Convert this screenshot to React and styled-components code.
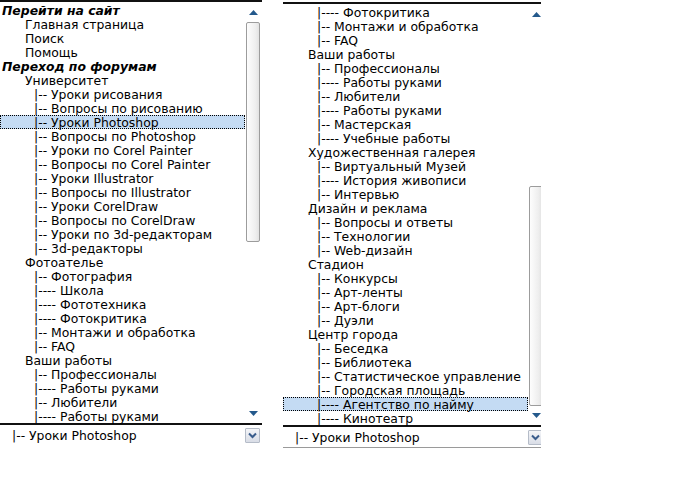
import React from 'react';
import styled, { createGlobalStyle } from 'styled-components';

const GlobalStyle = createGlobalStyle`
  body {
    margin: 0;
    background: #fff;
    font-family: 'DejaVu Sans', Verdana, sans-serif;
  }
`;

const ROW = 14;

// level: 0 = group label, 1 = section, 2 = forum
const siteMenu = [
  { level: 0, text: 'Перейти на сайт' },
  { level: 1, text: 'Главная страница' },
  { level: 1, text: 'Поиск' },
  { level: 1, text: 'Помощь' },
  { level: 0, text: 'Переход по форумам' },
  { level: 1, text: 'Университет' },
  { level: 2, text: '|-- Уроки рисования' },
  { level: 2, text: '|-- Вопросы по рисованию' },
  { level: 2, text: '|-- Уроки Photoshop', selected: true },
  { level: 2, text: '|-- Вопросы по Photoshop' },
  { level: 2, text: '|-- Уроки по Corel Painter' },
  { level: 2, text: '|-- Вопросы по Corel Painter' },
  { level: 2, text: '|-- Уроки Illustrator' },
  { level: 2, text: '|-- Вопросы по Illustrator' },
  { level: 2, text: '|-- Уроки CorelDraw' },
  { level: 2, text: '|-- Вопросы по CorelDraw' },
  { level: 2, text: '|-- Уроки по 3d-редакторам' },
  { level: 2, text: '|-- 3d-редакторы' },
  { level: 1, text: 'Фотоателье' },
  { level: 2, text: '|-- Фотография' },
  { level: 2, text: '|---- Школа' },
  { level: 2, text: '|---- Фототехника' },
  { level: 2, text: '|---- Фотокритика' },
  { level: 2, text: '|-- Монтажи и обработка' },
  { level: 2, text: '|-- FAQ' },
  { level: 1, text: 'Ваши работы' },
  { level: 2, text: '|-- Профессионалы' },
  { level: 2, text: '|---- Работы руками' },
  { level: 2, text: '|-- Любители' },
  { level: 2, text: '|---- Работы руками' },
];

const forumMenu = [
  { level: 2, text: '|---- Фотокритика' },
  { level: 2, text: '|-- Монтажи и обработка' },
  { level: 2, text: '|-- FAQ' },
  { level: 1, text: 'Ваши работы' },
  { level: 2, text: '|-- Профессионалы' },
  { level: 2, text: '|---- Работы руками' },
  { level: 2, text: '|-- Любители' },
  { level: 2, text: '|---- Работы руками' },
  { level: 2, text: '|-- Мастерская' },
  { level: 2, text: '|---- Учебные работы' },
  { level: 1, text: 'Художественная галерея' },
  { level: 2, text: '|-- Виртуальный Музей' },
  { level: 2, text: '|---- История живописи' },
  { level: 2, text: '|-- Интервью' },
  { level: 1, text: 'Дизайн и реклама' },
  { level: 2, text: '|-- Вопросы и ответы' },
  { level: 2, text: '|-- Технологии' },
  { level: 2, text: '|-- Web-дизайн' },
  { level: 1, text: 'Стадион' },
  { level: 2, text: '|-- Конкурсы' },
  { level: 2, text: '|-- Арт-ленты' },
  { level: 2, text: '|-- Арт-блоги' },
  { level: 2, text: '|-- Дуэли' },
  { level: 1, text: 'Центр города' },
  { level: 2, text: '|-- Беседка' },
  { level: 2, text: '|-- Библиотека' },
  { level: 2, text: '|-- Статистическое управление' },
  { level: 2, text: '|-- Городская площадь' },
  { level: 2, text: '|---- Агентство по найму', selected: true },
  { level: 2, text: '|---- Кинотеатр' },
];

const INDENT = [2, 25, 34];

const Page = styled.div`
  display: flex;
  align-items: flex-start;
  gap: 21px;
`;

const Frame = styled.div`
  width: ${p => p.$width}px;
  margin-top: ${p => p.$top}px;
  overflow: hidden;
`;

const Dropdown = styled.div`
  width: 262px;
  display: flex;
  flex-direction: column;
`;

const ListBox = styled.div`
  display: flex;
  border-top: 2px solid #111;
  border-bottom: 2px solid #111;
  padding-top: 1px;
`;

const Options = styled.div`
  width: 245px;
  display: flex;
  flex-direction: column;
`;

const Option = styled.div`
  height: ${ROW}px;
  line-height: 16px;
  font-size: 12.4px;
  color: #000;
  white-space: nowrap;
  padding-left: ${p => INDENT[p.$level]}px;
  font-weight: ${p => (p.$level === 0 ? 'bold' : 'normal')};
  font-style: ${p => (p.$level === 0 ? 'italic' : 'normal')};
  background: ${p => (p.$selected ? '#c4dbf3' : 'transparent')};
  outline: ${p => (p.$selected ? '1px dotted #000' : 'none')};
  outline-offset: -1px;
`;

const ScrollBar = styled.div`
  width: 16px;
  display: flex;
  flex-direction: column;
`;

const ArrowButton = styled.div`
  height: 19px;
  display: flex;
  align-items: center;
  justify-content: center;
`;

const Track = styled.div`
  flex: 1;
  display: flex;
  flex-direction: column;
  justify-content: ${p => (p.$at === 'end' ? 'flex-end' : 'flex-start')};
`;

const Thumb = styled.div`
  height: 220px;
  margin: 0 1px;
  border: 1px solid #9c9c9c;
  border-radius: 2px;
  box-sizing: border-box;
  background: linear-gradient(to right, #fdfdfd, #eeeeee 70%, #e2e2e2);
`;

const SelectRow = styled.div`
  height: 20px;
  display: flex;
  align-items: center;
  border-bottom: ${p => (p.$underline ? '1px solid #9a9a9a' : '1px solid transparent')};
`;

const SelectValue = styled.div`
  flex: 1;
  padding-left: 12px;
  font-size: 12.4px;
  color: #000;
  white-space: nowrap;
`;

const SelectButton = styled.div`
  width: 15px;
  height: 15px;
  margin-right: 2px;
  box-sizing: border-box;
  border: 1px solid #b5bcc8;
  border-radius: 1px;
  background: linear-gradient(#f4f5f8, #d9dde6);
  display: flex;
  align-items: center;
  justify-content: center;
`;

const Triangle = ({ down }) => (
  <svg width="9" height="5" viewBox="0 0 9 5">
    <polygon points={down ? '0,0 9,0 4.5,5' : '0,5 9,5 4.5,0'} fill="#24598c" />
  </svg>
);

const Chevron = () => (
  <svg width="9" height="7" viewBox="0 0 9 7">
    <polyline points="1,1.5 4.5,5 8,1.5" fill="none" stroke="#3a5d8c" strokeWidth="2" />
  </svg>
);

const DropList = ({ items, thumbAt, value, width, top, underline }) => (
  <Frame $width={width} $top={top}>
    <Dropdown>
      <ListBox>
        <Options>
          {items.map((item, i) => (
            <Option key={i} $level={item.level} $selected={item.selected}>
              {item.text}
            </Option>
          ))}
        </Options>
        <ScrollBar>
          <ArrowButton><Triangle /></ArrowButton>
          <Track $at={thumbAt}><Thumb /></Track>
          <ArrowButton><Triangle down /></ArrowButton>
        </ScrollBar>
      </ListBox>
      <SelectRow $underline={underline}>
        <SelectValue>{value}</SelectValue>
        <SelectButton><Chevron /></SelectButton>
      </SelectRow>
    </Dropdown>
  </Frame>
);

const App = () => (
  <>
    <GlobalStyle />
    <Page>
      <DropList items={siteMenu} thumbAt="start" value="|-- Уроки Photoshop" width={262} top={0} />
      <DropList items={forumMenu} thumbAt="end" value="|-- Уроки Photoshop" width={258} top={2} underline />
    </Page>
  </>
);

export default App;
